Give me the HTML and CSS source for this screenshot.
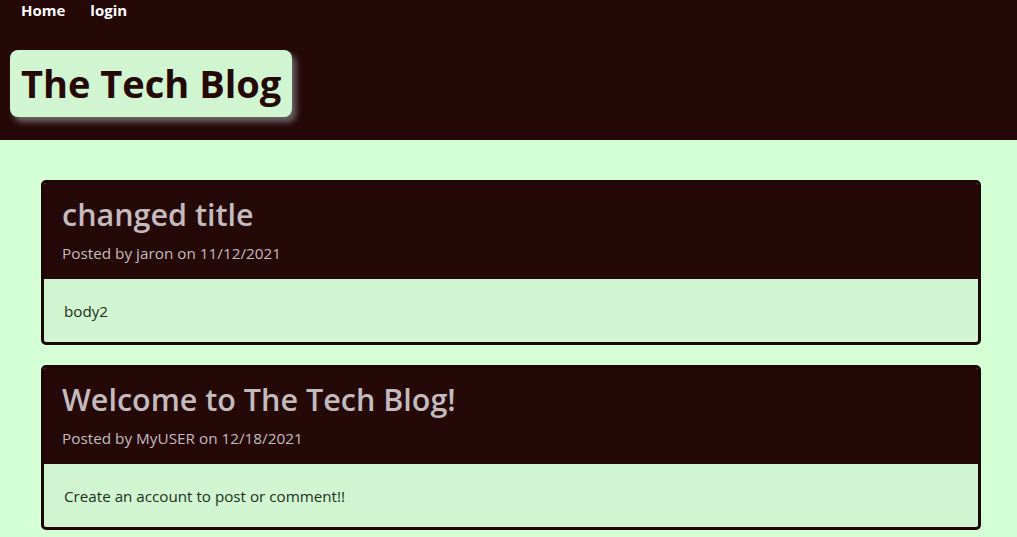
FILE: index.html
```html
<!DOCTYPE html>
<html lang="en">
<head>
<meta charset="utf-8">
<title>The Tech Blog</title>
<link rel="stylesheet" href="styles.css">
</head>
<body>
<header class="site-header">
  <nav class="nav">
    <a href="#" class="nav-link">Home</a>
    <a href="#" class="nav-link">login</a>
  </nav>
  <h1 class="brand">The Tech Blog</h1>
</header>
<main class="posts">
  <article class="card">
    <div class="card-header">
      <h2 class="card-title">changed title</h2>
      <p class="card-meta">Posted by jaron on 11/12/2021</p>
    </div>
    <div class="card-body">
      <p>body2</p>
    </div>
  </article>
  <article class="card">
    <div class="card-header">
      <h2 class="card-title">Welcome to The Tech Blog!</h2>
      <p class="card-meta">Posted by MyUSER on 12/18/2021</p>
    </div>
    <div class="card-body">
      <p>Create an account to post or comment!!</p>
    </div>
  </article>
</main>
</body>
</html>
```
FILE: styles.css
```css
* { box-sizing: border-box; }
html, body { margin: 0; padding: 0; }
body {
  background: #d5ffd5;
  font-family: "Open Sans", "Noto Sans", sans-serif;
  color: #1d2e22;
}
.site-header {
  background: #250808;
  height: 140px;
  padding: 0 0 0 10px;
}
.nav {
  display: flex;
  gap: 25px;
  padding-left: 11px;
  height: 20px;
  align-items: center;
}
.nav-link {
  color: #ffffff;
  font-weight: 700;
  font-size: 15px;
  text-decoration: none;
  line-height: 20px;
}
.brand {
  display: inline-block;
  margin: 30px 0 0 0;
  background: #d0f5d0;
  color: #250808;
  font-size: 38px;
  font-weight: 700;
  line-height: 47px;
  padding: 10px 11px;
  border-radius: 8px;
  box-shadow: 4px 5px 6px #6e6668;
}
.posts {
  display: flex;
  flex-direction: column;
  gap: 20px;
  padding: 40px 36px 0 41px;
}
.card {
  border: 3px solid #1c0606;
  border-radius: 5px;
  overflow: hidden;
  background: #d0f5d0;
}
.card-header {
  background: #250808;
  padding: 12px 18px 14px;
}
.card-title {
  margin: 0 0 8px;
  color: #c3bbbe;
  font-size: 30.5px;
  font-weight: 600;
  line-height: 38px;
}
.card-meta {
  margin: 0;
  color: #c3bbbe;
  font-size: 15.3px;
  line-height: 24px;
}
.card-body {
  padding: 20px 20px 19px;
}
.card-body p {
  margin: 0;
  font-size: 15.2px;
  line-height: 24px;
  color: #1d2e22;
}
```
